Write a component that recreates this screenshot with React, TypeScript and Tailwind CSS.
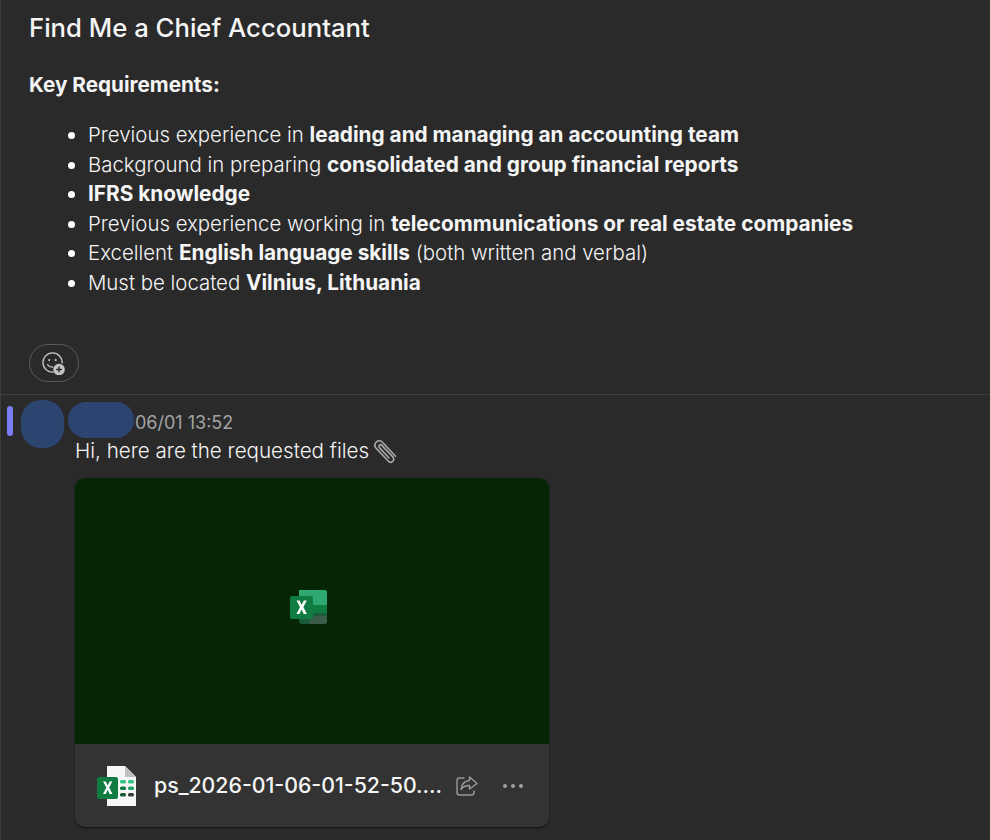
const items = [
  <>Previous experience in <b className="font-bold text-[20.800px]">leading and managing an accounting team</b></>,
  <>Background in preparing <b className="font-bold text-[20.800px]">consolidated and group financial reports</b></>,
  <b className="font-bold text-[20.800px]">IFRS knowledge</b>,
  <>Previous experience working in <b className="font-bold text-[20.800px]">telecommunications or real estate companies</b></>,
  <>Excellent <b className="font-bold text-[20.800px]">English language skills</b> (both written and verbal)</>,
  <>Must be located <b className="font-bold text-[20.800px]">Vilnius, Lithuania</b></>,
];

function ReactionIcon() {
  return (
    <svg width="24" height="24" viewBox="2 1 20 20" fill="none" className="-ml-[1px]">
      <path d="M11.500 18.600A8 8 0 1 1 18.800 11" stroke="#c4c4c4" strokeWidth="1.100" strokeLinecap="round" />
      <circle cx="8" cy="8.600" r="0.900" fill="#c4c4c4" />
      <circle cx="13.400" cy="8.600" r="0.900" fill="#c4c4c4" />
      <path d="M6.600 12.400c1 1.500 2.500 2.200 4.400 2.100" stroke="#c4c4c4" strokeWidth="1.100" strokeLinecap="round" />
      <circle cx="16.200" cy="16.400" r="4.800" fill="#c4c4c4" />
      <path d="M16.200 14v4.800M13.800 16.400h4.800" stroke="#2a2a2a" strokeWidth="1.200" />
    </svg>
  );
}

function PaperclipIcon() {
  return (
    <svg width="28" height="28" viewBox="0 0 24 24" fill="none" className="-ml-[4px]">
      <path d="M21 16.500 10 4.700C8.500 3 6.200 2.900 4.600 4.300 3 5.800 3 8 4.400 9.600l10.300 11c1.100 1.200 2.800 1.300 3.900.300 1.100-1 1.200-2.700.100-3.900L9.300 7.200c-.600-.700-1.500-.700-2.100-.200-.600.600-.600 1.400 0 2.100l8.300 8.900" stroke="#a9a9a9" strokeWidth="1.400" strokeLinecap="round" />
    </svg>
  );
}

function ExcelLarge() {
  return (
    <svg width="37" height="35" viewBox="0 0 37 35">
      <path d="M9 0h25a3 3 0 0 1 3 3v14H9z" fill="#21a366" />
      <path d="M9 0h25a3 3 0 0 1 3 3v12H9z" fill="#2fa971" />
      <rect x="21" y="15" width="16" height="9" fill="#107c41" />
      <path d="M9 23h28v8a3 3 0 0 1-3 3H12a3 3 0 0 1-3-3z" fill="#1a5c3a" />
      <path d="M19 26h18v5a3 3 0 0 1-3 3H20z" fill="#3a5c49" />
      <rect x="0" y="6" width="23" height="23" rx="2" fill="#107c41" />
      <path d="M6.500 10.500h3.200l2 4.400 2.100-4.400h3l-3.400 6.500 3.500 7h-3.200l-2.100-4.600-2.100 4.600H6.400l3.600-7z" fill="#fff" />
    </svg>
  );
}

function ExcelFile() {
  return (
    <svg width="42" height="42" viewBox="0 0 42 42">
      <path d="M10 1h18l11 11v29H10z" fill="#f7f7f7" />
      <path d="M28 1v11h11z" fill="#bfbfbf" />
      <rect x="0" y="12" width="21" height="22" rx="2" fill="#107c41" />
      <path d="M6 16.500h2.800l1.900 4 1.900-4h2.700l-3.100 6 3.200 6.500h-2.800l-1.900-4.200-2 4.200H6l3.300-6.500z" fill="#fff" />
      <rect x="23" y="15" width="6" height="3.500" rx="1.500" fill="#33c481" />
      <rect x="31" y="15" width="6" height="3.500" rx="1.500" fill="#33c481" />
      <rect x="23" y="21.500" width="6" height="3.500" rx="1.500" fill="#107c41" />
      <rect x="31" y="21.500" width="6" height="3.500" rx="1.500" fill="#21a366" />
      <rect x="23" y="28" width="6" height="3.500" rx="1.500" fill="#185c37" />
      <rect x="31" y="28" width="6" height="3.500" rx="1.500" fill="#33413a" />
    </svg>
  );
}

function ShareIcon() {
  return (
    <svg width="24" height="22" viewBox="0 0 24 22" fill="none" stroke="#9a9a9a" strokeWidth="1.400" strokeLinecap="round" strokeLinejoin="round">
      <path d="M9 3H4.500A2.500 2.500 0 0 0 2 5.500v12A2.500 2.500 0 0 0 4.500 20h12a2.500 2.500 0 0 0 2.500-2.500V16" />
      <path d="M14.500 2 22 8.500 14.500 14v-3.500c-3.500 0-6.500 1-8.500 4 .5-5 3.500-8.500 8.500-9z" />
    </svg>
  );
}

export default function App() {
  return (
    <div className="h-[840px] overflow-hidden bg-[#2a2a2a] border-l border-[#3c3c3c] text-[#f5f5f5] font-['Inter',sans-serif]">
      <section className="h-[382px] pl-[28px] pt-[12px] border-b border-[#3e3e3e] box-content">
        <h1 className="text-[25.700px] leading-[32px] font-medium">Find Me a Chief Accountant</h1>
        <p className="mt-[26px] text-[20.700px] leading-[30px] font-bold">Key Requirements:</p>
        <ul className="mt-[20px] pl-[59px] list-disc text-[20.400px] leading-[29.600px] font-light marker:text-white">
          {items.map((item, i) => (
            <li key={i}>{item}</li>
          ))}
        </ul>
        <button className="mt-[46px] w-[50px] h-[38px] rounded-full border border-[#5a5a5a] flex items-center justify-center">
          <ReactionIcon />
        </button>
      </section>

      <section className="flex pt-[5px]">
        <div className="w-[6px] h-[30px] mt-[6px] ml-[6px] rounded-full bg-[#7c7cf8] shrink-0" />
        <div className="w-[43px] h-[48px] ml-[8px] rounded-[20px] bg-[#2c4570] shrink-0" />
        <div className="ml-[11px] flex flex-col">
          <div className="flex h-[38px] -ml-[7px]">
            <div className="w-[66px] h-[36px] mt-[2px] rounded-[18px] bg-[#2c4570]" />
            <span className="mt-[10px] ml-px text-[18px] leading-[26px] text-[#a3a3a3]">06/01 13:52</span>
          </div>
          <p className="flex items-center mt-[-2px] h-[30px] text-[20.600px] leading-[30px] font-light whitespace-pre">
            Hi, here are the requested files <PaperclipIcon />
          </p>
          <div className="mt-[12px] w-[474px] h-[349px] rounded-[10px] overflow-hidden bg-[#333333] shadow-[0_1px_2px_rgba(0,0,0,0.5)] flex flex-col">
            <div className="h-[266px] bg-[#052505] flex items-center justify-center pr-[8px] pb-[8px]">
              <ExcelLarge />
            </div>
            <div className="flex-1 flex items-center pl-[22px]">
              <ExcelFile />
              <span className="ml-[15px] w-[290px] shrink-0 text-[21.300px] font-medium whitespace-nowrap">ps_2026-01-06-01-52-50....</span>
              <div className="ml-[11px]"><ShareIcon /></div>
              <span className="ml-[24px] flex gap-[4px]">
                <i className="size-[4px] rounded-full bg-[#a0a0a0]" />
                <i className="size-[4px] rounded-full bg-[#a0a0a0]" />
                <i className="size-[4px] rounded-full bg-[#a0a0a0]" />
              </span>
            </div>
          </div>
        </div>
      </section>
    </div>
  );
}
